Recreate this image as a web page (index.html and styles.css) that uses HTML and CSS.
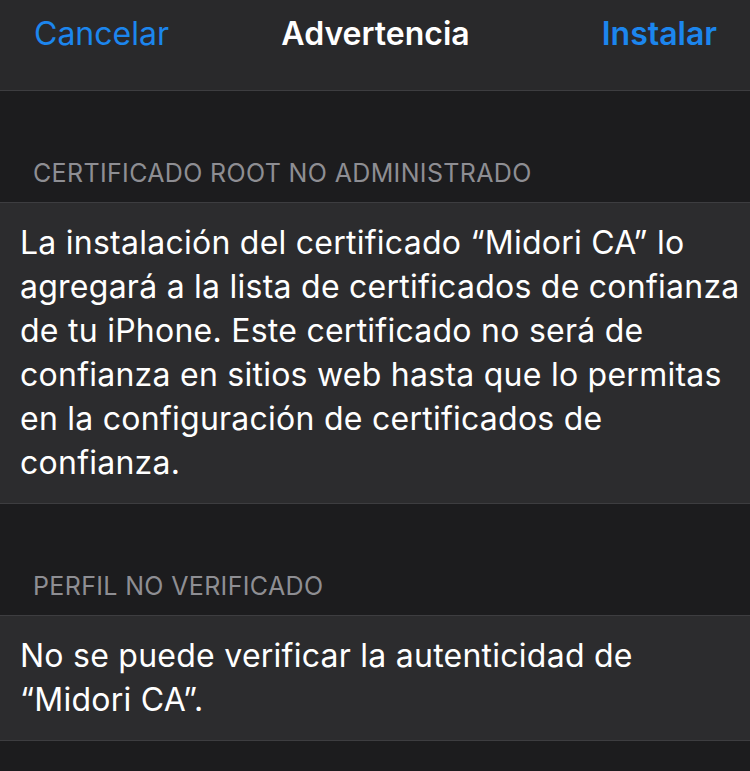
FILE: index.html
```html
<!DOCTYPE html>
<html lang="es">
<head>
<meta charset="utf-8">
<link rel="stylesheet" href="styles.css">
</head>
<body>
<header class="nav">
  <span class="nav-btn nav-left">Cancelar</span>
  <span class="nav-title">Advertencia</span>
  <span class="nav-btn nav-right">Instalar</span>
</header>
<section class="group">
  <div class="group-header">CERTIFICADO ROOT NO ADMINISTRADO</div>
  <div class="cell">La instalación del certificado “Midori CA” lo agregará a la lista de certificados de confianza de tu iPhone. Este certificado no será de confianza en sitios web hasta que lo permitas en la configuración de certificados de confianza.</div>
</section>
<section class="group">
  <div class="group-header">PERFIL NO VERIFICADO</div>
  <div class="cell">No se puede verificar la autenticidad de “Midori CA”.</div>
</section>
</body>
</html>
```
FILE: styles.css
```css
html, body {
  margin: 0;
  padding: 0;
  background: #1c1c1e;
  font-family: Inter, "Liberation Sans", sans-serif;
  color: #ffffff;
  height: 100%;
  overflow: hidden;
}
.nav {
  height: 91px;
  box-sizing: border-box;
  background: #29292b;
  border-bottom: 1px solid #3d3d40;
  display: grid;
  grid-template-columns: 1fr auto 1fr;
  align-items: start;
  padding: 14px 33px 0 34px;
  font-size: 32px;
  line-height: 40px;
}
.nav-btn {
  color: #1c86ee;
}
.nav-left {
  justify-self: start;
}
.nav-right {
  justify-self: end;
  font-weight: 600;
}
.nav-title {
  font-weight: 600;
  color: #ffffff;
}
.group-header {
  color: #8e8e93;
  font-size: 25px;
  letter-spacing: 0.35px;
  line-height: 30px;
  padding: 67px 33px 14px;
}
.cell {
  background: #2c2c2e;
  border-top: 1px solid #3d3d40;
  border-bottom: 1px solid #3d3d40;
  font-size: 32px;
  letter-spacing: 0.25px;
  line-height: 44px;
  padding: 18px 10px 18px 20px;
}
```
